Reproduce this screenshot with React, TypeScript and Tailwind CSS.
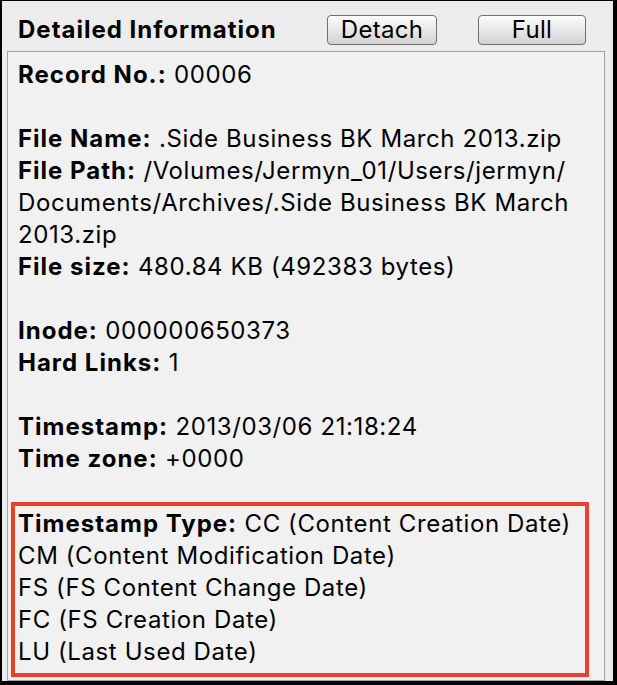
import React from 'react';

const font = { fontFamily: 'Inter, "Liberation Sans", sans-serif' };

const Line: React.FC<{ label?: string; children?: React.ReactNode }> = ({ label, children }) => (
  <div className="h-[32px] leading-[32px] whitespace-nowrap">
    {label && <span className="font-bold tracking-[1px]">{label}</span>}
    {label && ' '}
    {children}
  </div>
);

const Blank = () => <div className="h-[32px]" />;

const MacButton: React.FC<{ label: string; width: string }> = ({ label, width }) => (
  <button
    className={`${width} h-[30px] rounded-[4px] border border-[#707070] bg-gradient-to-b from-[#fdfdfd] to-[#d2d2d2] text-[24px] leading-[28px] tracking-[0.3px] text-black`}
  >
    {label}
  </button>
);

export default function App() {
  return (
    <div
      className="w-[617px] h-[685px] bg-[#ececec] border-l-2 border-t border-r-4 border-b-4 border-black text-black text-[24px] tracking-[0.6px] flex flex-col"
      style={font}
    >
      <div className="h-[50px] shrink-0 flex items-center pl-[16px] pt-[8px]">
        <div className="w-[309px] font-bold tracking-[1px] text-[24px]">Detailed Information</div>
        <MacButton label="Detach" width="w-[110px]" />
        <div className="w-[41px]" />
        <MacButton label="Full" width="w-[108px]" />
      </div>

      <div className="ml-[5px] mr-[8px] h-[630px] border border-[#a3a3a3] bg-[#f1f1f1] pt-[7px] pl-[3px]">
        <div className="pl-[7px]">
          <Line label="Record No.:">00006</Line>
          <Blank />
          <Line label="File Name:">.Side Business BK March 2013.zip</Line>
          <Line label="File Path:">/Volumes/Jermyn_01/Users/jermyn/</Line>
          <Line>Documents/Archives/.Side Business BK March</Line>
          <Line>2013.zip</Line>
          <Line label="File size:">480.84 KB (492383 bytes)</Line>
          <Blank />
          <Line label="Inode:">000000650373</Line>
          <Line label="Hard Links:">1</Line>
          <Blank />
          <Line label="Timestamp:">2013/03/06 21:18:24</Line>
          <Line label="Time zone:">+0000</Line>
        </div>

        <div className="mt-[27px] w-[578px] border-4 border-[#e8412c] pt-[2px] pb-[5px] pl-[3px]">
          <Line label="Timestamp Type:">CC (Content Creation Date)</Line>
          <Line>CM (Content Modification Date)</Line>
          <Line>FS (FS Content Change Date)</Line>
          <Line>FC (FS Creation Date)</Line>
          <Line>LU (Last Used Date)</Line>
        </div>
      </div>
    </div>
  );
}
